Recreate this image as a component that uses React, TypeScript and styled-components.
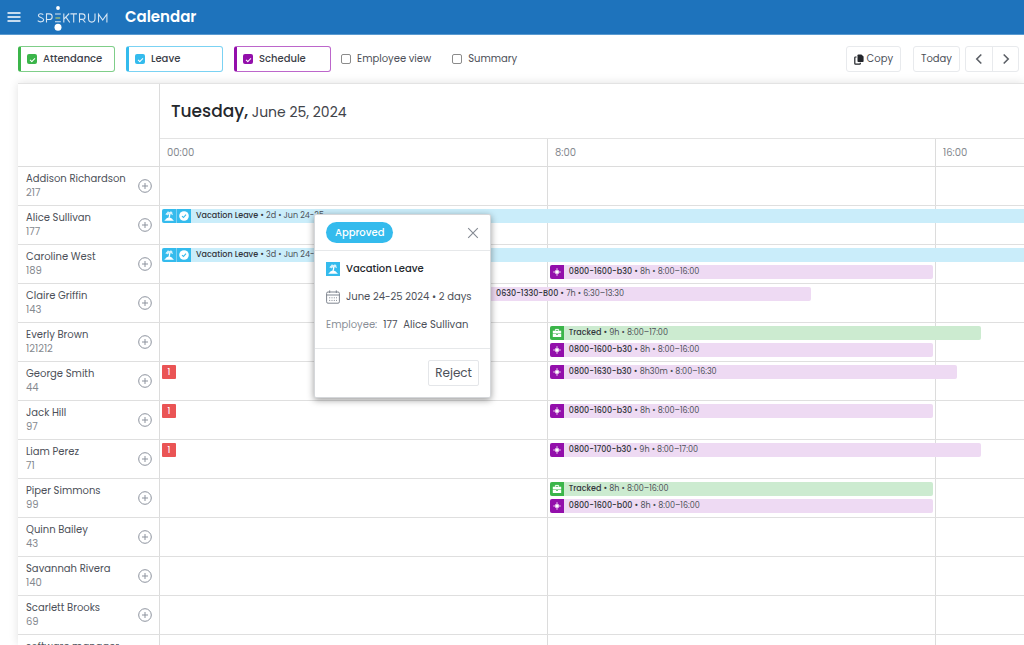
import React from "react";
import styled, { createGlobalStyle, css } from "styled-components";

const Global = createGlobalStyle`
  *, *::before, *::after { box-sizing: border-box; }
  html, body, #root { height: 100%; }
  body {
    margin: 0;
    overflow: hidden;
    background: #fff;
    color: #4c5058;
    font-family: Poppins, Inter, "Liberation Sans", sans-serif;
    font-size: 10px;
  }
  button, input { font: inherit; color: inherit; }
  h1, h2, p { margin: 0; padding: 0; }
`;

const Page = styled.div`
  height: 100%;
  display: flex;
  flex-direction: column;
`;

const TopBar = styled.header`
  flex: none;
  height: 35px;
  display: flex;
  align-items: center;
  padding: 0 7px;
  background: #1e73bc;
  border-bottom: 1px solid #5a9ad0;
`;

const MenuButton = styled.button`
  display: flex;
  padding: 0;
  border: 0;
  background: none;
  color: #fff;
`;

const Brand = styled.a`
  display: flex;
  margin-left: 16px;
`;

const PageTitle = styled.h1`
  margin-left: 17px;
  color: #fff;
  font-size: 15px;
  line-height: 20px;
  font-weight: 600;
`;

const Toolbar = styled.div`
  flex: none;
  height: 48px;
  display: flex;
  align-items: center;
  padding: 0 5px 0 18px;
`;

const Filters = styled.div`
  display: flex;
  gap: 11px;
`;

const FilterBox = styled.label<{ $color: string; $edge: string }>`
  width: 97px;
  height: 26px;
  display: flex;
  align-items: center;
  gap: 6px;
  padding-left: 6px;
  border: 1px solid ${(p) => p.$edge};
  border-left: 3px solid ${(p) => p.$color};
  border-radius: 3px;
  color: #3c4048;
  font-weight: 500;
`;

const Check = styled.input<{ $color?: string }>`
  appearance: none;
  width: 10px;
  height: 10px;
  margin: 0;
  border: 1px solid #8b8b8b;
  border-radius: 2px;
  ${(p) =>
    p.$color &&
    css`
      border: 0;
      background: ${p.$color};
      display: grid;
      place-items: center;
      &::after {
        content: "";
        width: 5px;
        height: 3px;
        border-left: 1px solid #fff;
        border-bottom: 1px solid #fff;
        transform: rotate(-45deg);
      }
    `}
`;

const Option = styled.label`
  display: flex;
  align-items: center;
  gap: 6px;
  margin-left: 10px;
  & + & { margin-left: 21px; }
`;

const Actions = styled.div`
  margin-left: auto;
  display: flex;
`;

const ActionButton = styled.button`
  height: 26px;
  display: flex;
  align-items: center;
  gap: 3px;
  padding: 0 7px;
  border: 1px solid #e8eaed;
  border-radius: 3px;
  background: #fff;
  & + & { margin-left: 12px; }
`;

const Pager = styled.div`
  display: flex;
  margin-left: 5px;
  border: 1px solid #e8eaed;
  border-radius: 3px;
`;

const PagerButton = styled.button`
  width: 26px;
  height: 24px;
  display: grid;
  place-items: center;
  padding: 0;
  border: 0;
  background: none;
  & + & { border-left: 1px solid #e8eaed; }
`;

const Sheet = styled.main`
  position: relative;
  flex: 1;
  min-height: 0;
  overflow: hidden;
  margin-left: 18px;
  border-top: 1px solid #e3e3e3;
  box-shadow: 0 0 9px rgba(0, 0, 0, 0.12);
`;

const columns = css`
  display: grid;
  grid-template-columns: 142px minmax(0, 1fr);
`;

const SheetHead = styled.div`
  ${columns}
  height: 83px;
  border-bottom: 1px solid #dcdcdc;
`;

const HeadSide = styled.div`
  border-right: 1px solid #dcdcdc;
`;

const DateTitle = styled.h2`
  height: 55px;
  padding-left: 11px;
  border-bottom: 1px solid #e3e3e3;
  color: #3f434a;
  font-size: 14px;
  line-height: 54px;
  font-weight: 400;
  strong {
    color: #25282d;
    font-size: 17px;
    font-weight: 500;
  }
`;

/* Three eight-hour slots, the last one partly beyond the window. */
const slots = css`
  display: grid;
  grid-template-columns: 44.8% 44.9% minmax(0, 1fr);
`;

const Hours = styled.div`
  ${slots}
  height: 27px;
`;

const Hour = styled.div`
  padding-left: 7px;
  color: #85898f;
  line-height: 28px;
  & + & { border-left: 1px solid #dcdcdc; }
`;

const Row = styled.div`
  ${columns}
  height: 39px;
  border-bottom: 1px solid #dfdfdf;
`;

const Person = styled.div`
  display: flex;
  justify-content: space-between;
  align-items: center;
  padding: 0 7px 0 8px;
  border-right: 1px solid #dcdcdc;
`;

const PersonText = styled.div`
  line-height: 14px;
  white-space: nowrap;
`;

const PersonId = styled.div`
  min-height: 14px;
  color: #85898f;
`;

const AddButton = styled.button`
  display: flex;
  padding: 0;
  border: 0;
  background: none;
  color: #8d939e;
`;

const Track = styled.div`
  ${slots}
  grid-template-rows: 38px;
`;

const SlotCell = styled.div<{ $column: number }>`
  grid-area: 1 / ${(p) => p.$column};
  & + & { border-left: 1px solid #dcdcdc; }
`;

const Events = styled.div`
  grid-row: 1;
  grid-column: 1 / -1;
  z-index: 1;
  display: flex;
  flex-direction: column;
  gap: 3px;
  padding-top: 3px;
`;

const Lane = styled.div`
  display: grid;
  grid-template-columns: minmax(0, 1fr);
  height: 14px;
`;

const Bar = styled.div<{ $tint: string; $cut?: boolean }>`
  grid-area: 1 / 1;
  height: 14px;
  display: flex;
  align-items: center;
  border-radius: ${(p) => (p.$cut ? "2px 0 0 2px" : "2px")};
  background: ${(p) => p.$tint};
  font-size: 8px;
  line-height: 14px;
  white-space: nowrap;
  overflow: hidden;
`;

const BarIcon = styled.span<{ $color: string }>`
  flex: none;
  width: 14px;
  height: 14px;
  display: grid;
  place-items: center;
  background: ${(p) => p.$color};
  color: #fff;
  & + & { border-left: 1px solid #7bd0f3; width: 15px; }
`;

const BarText = styled.span`
  margin-left: 5px;
  strong {
    color: #33363c;
    font-weight: 500;
  }
`;

const Alert = styled.span`
  grid-area: 1 / 1;
  width: 14px;
  height: 14px;
  margin-left: 2px;
  border-radius: 1px;
  background: #ea5455;
  color: #fff;
  font-size: 8px;
  font-weight: 500;
  line-height: 15px;
  text-align: center;
`;

const Popover = styled.section`
  position: absolute;
  z-index: 5;
  left: 296px;
  top: 130px;
  width: 177px;
  border: 1px solid #d5d7da;
  border-radius: 2px;
  background: #fff;
  box-shadow: 0 2px 7px rgba(0, 0, 0, 0.4);
`;

const PopoverHead = styled.div`
  height: 36px;
  display: flex;
  align-items: center;
  justify-content: space-between;
  padding: 0 11px;
  border-bottom: 1px solid #e6e8ea;
`;

const Status = styled.span`
  padding: 0 9px;
  border-radius: 11px;
  background: #34bbed;
  color: #fff;
  font-weight: 500;
  line-height: 21px;
`;

const CloseButton = styled.button`
  display: flex;
  padding: 0;
  border: 0;
  background: none;
  color: #848992;
`;

const PopoverBody = styled.div`
  height: 98px;
  display: flex;
  flex-direction: column;
  gap: 12px;
  padding: 10px 11px;
  border-bottom: 1px solid #e6e8ea;
`;

const Line = styled.p<{ $strong?: boolean }>`
  display: flex;
  align-items: center;
  gap: 6px;
  line-height: 16px;
  white-space: nowrap;
  ${(p) => p.$strong && "color: #25282d; font-weight: 500;"}
`;

const Muted = styled.span`
  color: #8a8f97;
`;

const PopoverFoot = styled.div`
  display: flex;
  justify-content: flex-end;
  padding: 11px;
`;

const RejectButton = styled.button`
  height: 26px;
  padding: 0 6px;
  border: 1px solid #e4e6e9;
  border-radius: 2px;
  background: #fff;
  font-size: 12px;
`;

const Logo = () => (
  <svg width="71" height="30" viewBox="0 0 71 30" role="img" aria-label="Spektrum" fill="none" stroke="#d6e5f3" strokeWidth="1.1">
    <path d="M6.3 12.6C4.5 11.2 1.4 11.4 1.4 13.5C1.4 16.2 6.6 14.8 6.6 17.8C6.6 20.2 2.4 20.4.7 18.7" />
    <path d="M9.5 20.5V11.9H12.2C16.2 11.9 16.2 17.5 12.2 17.5H9.5" />
    <path d="M18 12H23.8M18 19.8H23.8" />
    <path d="M18.4 16H23.2" stroke="#c5cf62" />
    <path d="M26.8 11.4V20.5M32.2 11.5L26.9 17.1M28.9 15.2L32.8 20.5" />
    <path d="M33.4 11.9H40M36.7 11.9V20.5" />
    <path d="M42.5 20.5V11.9H45.2C49 11.9 49 17.4 45.2 17.4H42.5M45.6 17.4L48.4 20.5" />
    <path d="M51.5 11.4V16.6C51.5 21.3 58 21.3 58 16.6V11.4" />
    <path d="M61.5 20.5V12.2L65.7 18L69.9 12.2V20.5" />
    <circle cx="21" cy="6" r="1.9" fill="#fff" stroke="none" />
    <circle cx="21" cy="25.2" r="3.5" fill="#fff" stroke="none" />
  </svg>
);

const PalmIcon = () => (
  <svg width="12" height="12" viewBox="0 0 12 12" fill="none" stroke="currentColor" aria-hidden="true">
    <path d="M2.6 5C2.6 3.4 3.4 2.8 4.4 2.8C3.8 2.4 4 1.4 5 1.4C5.8 1.4 6.2 1.8 6.4 2.2C6.8 1.4 8.6 1 9.2 2C9.6 2.6 9.2 3 8.8 3C9.6 3.2 10 4 9.8 5.2C9 4.4 8.2 4.2 7.2 4.3C6.2 4.2 5.4 4.4 4.8 5.4C4 4.6 3.4 4.6 2.6 5Z" fill="currentColor" stroke="none" opacity=".8" />
    <path d="M6.7 4C6.8 5.8 6.4 6.8 5.9 8.4" strokeWidth="1.3" />
    <path d="M2.6 9.4C3.2 7.2 9 7.2 9.6 9.4L11 10.8H1.2Z" fill="currentColor" stroke="none" />
  </svg>
);

const SealIcon = () => (
  <svg width="10" height="10" viewBox="0 0 10 10" aria-hidden="true">
    <circle cx="5" cy="5" r="4.8" fill="#fff" />
    <path d="M3 5.1L4.5 6.5L7 3.7" fill="none" stroke="#34bbed" strokeWidth="1.1" />
  </svg>
);

const SunIcon = () => (
  <svg width="8" height="8" viewBox="0 0 8 8" aria-hidden="true">
    <circle cx="4" cy="4" r="1.8" fill="#fff" />
    <path d="M4 .2V7.8M.2 4H7.8" stroke="#fff" strokeWidth=".8" />
    <path d="M2 2L6 6M6 2L2 6" stroke="#fff" strokeWidth=".5" />
  </svg>
);

const CaseIcon = () => (
  <svg width="10" height="10" viewBox="0 0 10 10" aria-hidden="true">
    <path d="M3.4 2.8V1.4H6.6V2.8" fill="none" stroke="#fff" />
    <path d="M.8 2.8H9.2V5.4H.8ZM.8 6H4V6.7H6V6H9.2V9H.8Z" fill="#fff" />
  </svg>
);

const CalendarIcon = () => (
  <svg width="14" height="14" viewBox="0 0 14 14" fill="none" stroke="#7f858f" aria-hidden="true">
    <rect x=".6" y="2" width="12.8" height="11.2" rx="1.4" />
    <path d="M.6 5H13.4M3.7.4V3M10.3.4V3" />
    <path d="M3.2 7.8H11M3.2 10.4H11" strokeDasharray="1 1.3" />
  </svg>
);

const PlusCircle = () => (
  <svg width="14" height="14" viewBox="0 0 14 14" fill="none" stroke="currentColor" aria-hidden="true">
    <circle cx="7" cy="7" r="6.3" />
    <path d="M7 4V10M4 7H10" />
  </svg>
);

const CopyIcon = () => (
  <svg width="10" height="11" viewBox="0 0 10 11" aria-hidden="true">
    <path d="M4.3 .4H7.4L9.6 2.6V7.2Q9.6 8 8.8 8H4.3Q3.5 8 3.5 7.2V1.2Q3.5 .4 4.3 .4Z" fill="#22252a" />
    <path d="M2.6 3H1.5Q.8 3 .8 3.7V9.5Q.8 10.2 1.5 10.2H5.6Q6.3 10.2 6.3 9.5V8.7" fill="none" stroke="#22252a" strokeWidth="1.2" />
  </svg>
);

const Chevron = ({ d }: { d: string }) => (
  <svg width="8" height="12" viewBox="0 0 8 12" fill="none" stroke="#5b5f66" strokeWidth="1.6" aria-hidden="true">
    <path d={d} />
  </svg>
);

type Kind = "leave" | "schedule" | "tracked";
type EventItem = {
  kind: Kind;
  name: string;
  detail: string;
  start: number;
  end: number;
};
type Employee = {
  name: string;
  id?: string;
  alert?: number;
  lanes?: EventItem[];
};

const palette: Record<Kind, { color: string; tint: string }> = {
  leave: { color: "#34bbed", tint: "#caedfa" },
  schedule: { color: "#930fab", tint: "#eedaf3" },
  tracked: { color: "#3bb54a", tint: "#ccebd0" },
};

/* Share of the visible day that one hour takes. */
const HOUR = 5.61;
const VISIBLE_HOURS = 100 / HOUR;

const shift = (name: string, length: string, span: string, start: number, end: number): EventItem => ({
  kind: "schedule", name, detail: `${length} • ${span}`, start, end,
});
const tracked = (length: string, span: string, start: number, end: number): EventItem => ({
  kind: "tracked", name: "Tracked", detail: `${length} • ${span}`, start, end,
});
const leave = (detail: string): EventItem => ({
  kind: "leave", name: "Vacation Leave", detail, start: 0, end: 24,
});

const employees: Employee[] = [
  { name: "Addison Richardson", id: "217" },
  { name: "Alice Sullivan", id: "177", lanes: [leave("2d • Jun 24-25")] },
  { name: "Caroline West", id: "189", lanes: [leave("3d • Jun 24-26"), shift("0800-1600-b30", "8h", "8:00–16:00", 8, 16)] },
  { name: "Claire Griffin", id: "143", lanes: [shift("0630-1330-B00", "7h", "6:30–13:30", 6.5, 13.5)] },
  { name: "Everly Brown", id: "121212", lanes: [tracked("9h", "8:00–17:00", 8, 17), shift("0800-1600-b30", "8h", "8:00–16:00", 8, 16)] },
  { name: "George Smith", id: "44", alert: 1, lanes: [shift("0800-1630-b30", "8h30m", "8:00–16:30", 8, 16.5)] },
  { name: "Jack Hill", id: "97", alert: 1, lanes: [shift("0800-1600-b30", "8h", "8:00–16:00", 8, 16)] },
  { name: "Liam Perez", id: "71", alert: 1, lanes: [shift("0800-1700-b30", "9h", "8:00–17:00", 8, 17)] },
  { name: "Piper Simmons", id: "99", lanes: [tracked("8h", "8:00–16:00", 8, 16), shift("0800-1600-b00", "8h", "8:00–16:00", 8, 16)] },
  { name: "Quinn Bailey", id: "43" },
  { name: "Savannah Rivera", id: "140" },
  { name: "Scarlett Brooks", id: "69" },
  { name: "software manager" },
];

const EventBar = ({ event }: { event: EventItem }) => {
  const { color, tint } = palette[event.kind];
  const cut = event.end > VISIBLE_HOURS;
  return (
    <Bar
      $tint={tint}
      $cut={cut}
      style={{
        marginLeft: `calc(${event.start * HOUR}% + 2px)`,
        marginRight: cut ? 0 : `calc(${100 - event.end * HOUR}% + 3px)`,
      }}
    >
      <BarIcon $color={color}>
        {event.kind === "leave" && <PalmIcon />}
        {event.kind === "schedule" && <SunIcon />}
        {event.kind === "tracked" && <CaseIcon />}
      </BarIcon>
      {event.kind === "leave" && (
        <BarIcon $color={color}><SealIcon /></BarIcon>
      )}
      <BarText><strong>{event.name} •</strong> {event.detail}</BarText>
    </Bar>
  );
};

const EmployeeRow = ({ person }: { person: Employee }) => {
  const lanes = person.lanes ?? [];
  return (
    <Row>
      <Person>
        <PersonText>
          {person.name}
          <PersonId>{person.id}</PersonId>
        </PersonText>
        <AddButton aria-label={`Add entry for ${person.name}`}><PlusCircle /></AddButton>
      </Person>
      <Track>
        <SlotCell $column={1} /><SlotCell $column={2} /><SlotCell $column={3} />
        <Events>
          {lanes.map((event, i) => (
            <Lane key={i}>
              {i === 0 && person.alert && <Alert>{person.alert}</Alert>}
              <EventBar event={event} />
            </Lane>
          ))}
        </Events>
      </Track>
    </Row>
  );
};

export default function App() {
  return (
    <Page>
      <Global />
      <TopBar>
        <MenuButton aria-label="Menu">
          <svg width="14" height="12" viewBox="0 0 14 12" stroke="currentColor" strokeWidth="1.6" aria-hidden="true">
            <path d="M.5 2H13.5M.5 6H13.5M.5 10H13.5" />
          </svg>
        </MenuButton>
        <Brand href="#"><Logo /></Brand>
        <PageTitle>Calendar</PageTitle>
      </TopBar>
      <Toolbar>
        <Filters>
          <FilterBox $color="#3bb54a" $edge="#7fce89">
            <Check type="checkbox" defaultChecked $color="#3bb54a" />Attendance
          </FilterBox>
          <FilterBox $color="#34bbed" $edge="#7bd2f3">
            <Check type="checkbox" defaultChecked $color="#34bbed" />Leave
          </FilterBox>
          <FilterBox $color="#930fab" $edge="#bc66cb">
            <Check type="checkbox" defaultChecked $color="#930fab" />Schedule
          </FilterBox>
        </Filters>
        <Option><Check type="checkbox" />Employee view</Option>
        <Option><Check type="checkbox" />Summary</Option>
        <Actions>
          <ActionButton><CopyIcon />Copy</ActionButton>
          <ActionButton>Today</ActionButton>
          <Pager>
            <PagerButton aria-label="Previous day"><Chevron d="M6.3 1.5L1.8 6L6.3 10.5" /></PagerButton>
            <PagerButton aria-label="Next day"><Chevron d="M1.7 1.5L6.2 6L1.7 10.5" /></PagerButton>
          </Pager>
        </Actions>
      </Toolbar>
      <Sheet>
        <SheetHead>
          <HeadSide />
          <div>
            <DateTitle><strong>Tuesday,</strong> June 25, 2024</DateTitle>
            <Hours><Hour>00:00</Hour><Hour>8:00</Hour><Hour>16:00</Hour></Hours>
          </div>
        </SheetHead>
        {employees.map((person) => <EmployeeRow key={person.name} person={person} />)}
        <Popover role="dialog" aria-label="Leave details">
          <PopoverHead>
            <Status>Approved</Status>
            <CloseButton aria-label="Close">
              <svg width="12" height="12" viewBox="0 0 12 12" stroke="currentColor" strokeWidth="1.1" aria-hidden="true">
                <path d="M1.2 1.2L10.8 10.8M10.8 1.2L1.2 10.8" />
              </svg>
            </CloseButton>
          </PopoverHead>
          <PopoverBody>
            <Line $strong><BarIcon $color="#34bbed"><PalmIcon /></BarIcon>Vacation Leave</Line>
            <Line><CalendarIcon />June 24-25 2024 • 2 days</Line>
            <Line><Muted>Employee:</Muted><span>177</span><span>Alice Sullivan</span></Line>
          </PopoverBody>
          <PopoverFoot><RejectButton>Reject</RejectButton></PopoverFoot>
        </Popover>
      </Sheet>
    </Page>
  );
}
